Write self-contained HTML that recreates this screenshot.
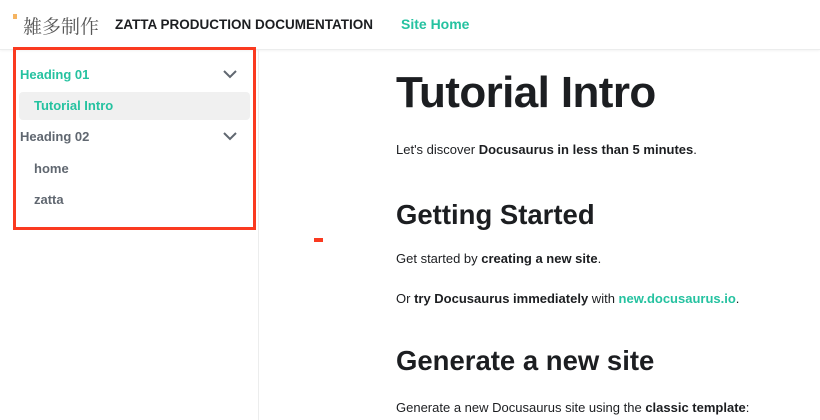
<!DOCTYPE html><html><head><meta charset="utf-8"><style>
*{margin:0;padding:0;box-sizing:border-box}
body{width:820px;height:420px;overflow:hidden;background:#fff;font-family:"Liberation Sans","Noto Sans CJK SC",sans-serif;color:#1c1e21;position:relative}
.a{position:absolute;white-space:nowrap}
.g{color:#25c2a0}
b{font-weight:700}
.p{font-size:13px;color:#1c1e21}
.h{font-weight:700;color:#1c1e21}
</style></head><body>
<div class="a" style="left:0;top:0;width:820px;height:50px;border-bottom:1px solid #eceded;box-shadow:0 1px 2px rgba(0,0,0,.05)"></div>
<div class="a" style="left:13px;top:14px;width:4px;height:5px;background:#f5b461"></div>
<div class="a" style="left:23px;top:12px;font-family:'Noto Serif CJK SC',serif;font-size:19px;color:#555">雑多制作</div>
<div class="a" style="left:115px;top:17px;font-size:13.5px;font-weight:700;color:#1c1e21">ZATTA PRODUCTION DOCUMENTATION</div>
<div class="a g" style="left:401px;top:16px;font-size:14px;font-weight:700">Site Home</div>
<div class="a" style="left:258px;top:50px;width:1px;height:370px;background:#eceded"></div>
<div class="a" style="left:19px;top:92px;width:231px;height:28px;background:#f0f0f0;border-radius:4px"></div>
<div class="a g" style="left:20px;top:67px;font-size:13px;font-weight:700">Heading 01</div>
<div class="a g" style="left:34px;top:98px;font-size:13px;font-weight:700">Tutorial Intro</div>
<div class="a" style="left:20px;top:129px;font-size:13px;font-weight:700;color:#606770">Heading 02</div>
<div class="a" style="left:34px;top:161px;font-size:13px;font-weight:700;color:#606770">home</div>
<div class="a" style="left:34px;top:192px;font-size:13px;font-weight:700;color:#606770">zatta</div>
<svg class="a" style="left:222px;top:69px" width="16" height="10"><path d="M2 2l6 6 6-6" fill="none" stroke="#606770" stroke-width="2"/></svg>
<svg class="a" style="left:222px;top:131px" width="16" height="10"><path d="M2 2l6 6 6-6" fill="none" stroke="#606770" stroke-width="2"/></svg>
<div class="a" style="left:13px;top:47px;width:243px;height:183px;border:3px solid #fa3a20"></div>
<div class="a" style="left:314px;top:238px;width:9px;height:4px;background:#fa3a20"></div>
<div class="a h" style="left:396px;top:68px;font-size:44px;letter-spacing:-0.6px">Tutorial Intro</div>
<div class="a p" style="left:396px;top:142px">Let's discover <b>Docusaurus in less than 5 minutes</b>.</div>
<div class="a h" style="left:396px;top:199px;font-size:27.5px">Getting Started</div>
<div class="a p" style="left:396px;top:251px">Get started by <b>creating a new site</b>.</div>
<div class="a p" style="left:396px;top:291px">Or <b>try Docusaurus immediately</b> with <b class="g">new.docusaurus.io</b>.</div>
<div class="a h" style="left:396px;top:345px;font-size:27.5px">Generate a new site</div>
<div class="a p" style="left:396px;top:400px">Generate a new Docusaurus site using the <b>classic template</b>:</div>
</body></html>
